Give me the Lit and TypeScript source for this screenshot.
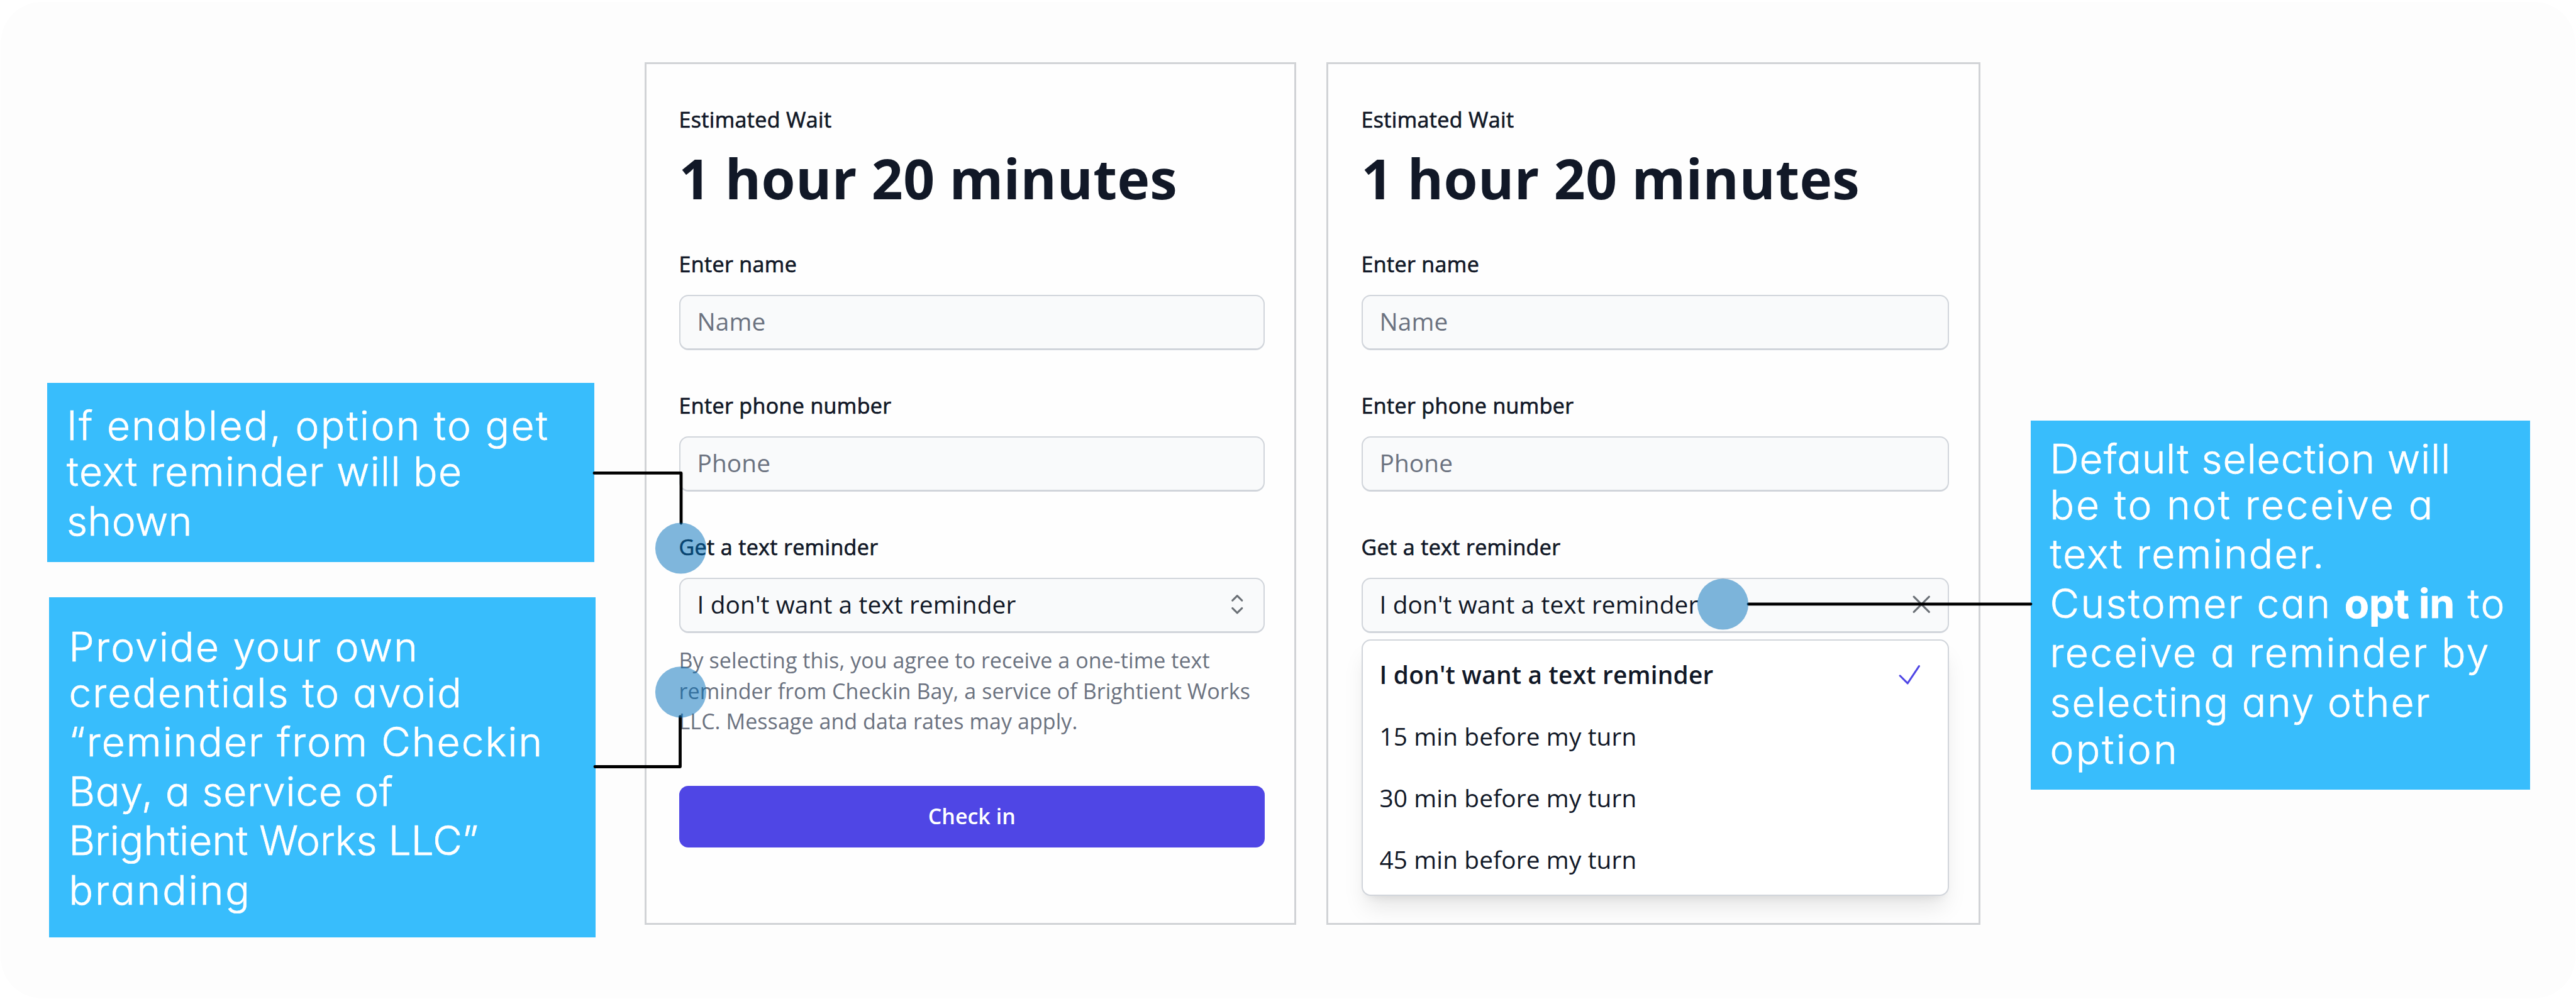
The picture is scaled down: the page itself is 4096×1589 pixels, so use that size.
import {LitElement, html, css, svg, nothing} from 'lit';
import {customElement, property} from 'lit/decorators.js';

interface NoteLine {
  text: unknown;
  spacing: number;
}

const chevrons = svg`<path d="M8.25 15L12 18.75 15.75 15m-7.5-6L12 5.25 15.75 9" />`;
const cross = svg`<path d="M6 18L18 6M6 6l12 12" />`;
const check = svg`<path d="M4.5 12.75l6 6 9-13.5" />`;

@customElement('note-box')
export class NoteBox extends LitElement {
  static override styles = css`
    :host {
      display: block;
      box-sizing: border-box;
      background: #38bdfc;
      color: #fff;
      font-family: 'Century Gothic', Inter, sans-serif;
      font-feature-settings: 'cv11';
      font-size: 64px;
      font-weight: 300;
      line-height: 78.6px;
      -webkit-text-stroke: 0.7px currentColor;
    }

    .line {
      white-space: pre;
    }

    .line:nth-child(2) {
      margin-top: -5.4px;
    }

    .line:nth-child(7) {
      margin-top: -4px;
    }

    b {
      font-weight: 700;
      letter-spacing: 0;
    }
  `;

  @property({attribute: false}) lines: NoteLine[] = [];

  override render() {
    return this.lines.map(
      (l) => html`<div class="line" style="letter-spacing:${l.spacing}px">${l.text}</div>`
    );
  }
}

@customElement('checkin-card')
export class CheckinCard extends LitElement {
  static override styles = css`
    :host {
      display: block;
      box-sizing: border-box;
      height: 1372px;
      border: 3px solid #d1d3d6;
      background: #fefefe;
      padding: 64px 47px 0 51.5px;
      color: #111827;
      font-family: 'Open Sans', 'Noto Sans', sans-serif;
      font-size: 34px;
      line-height: 48.5px;
    }

    h1 {
      margin: 20px 0 0;
      font-size: 87.4px;
      font-weight: 700;
      line-height: 97px;
      letter-spacing: 0.33px;
      white-space: nowrap;
    }

    .label {
      font-weight: 500;
      letter-spacing: 0.36px;
      -webkit-text-stroke: 0.7px currentColor;
    }

    .field {
      position: relative;
      margin-top: 64px;
    }

    .box {
      box-sizing: border-box;
      display: flex;
      align-items: center;
      justify-content: space-between;
      height: 88px;
      margin-top: 24.5px;
      padding: 0 18px 1px 27px;
      border: 2.4px solid #d1d5db;
      border-bottom-width: 3px;
      border-radius: 14.5px;
      background: #f9fafb;
      font-size: 38.8px;
      letter-spacing: 0.12px;
      white-space: nowrap;
    }

    .placeholder {
      color: #6b7280;
    }

    svg {
      flex: none;
      width: 48.5px;
      height: 48.5px;
      fill: none;
      stroke: #6b7076;
      stroke-width: 1.5;
      stroke-linecap: round;
      stroke-linejoin: round;
    }

    .terms {
      margin: 19.5px 0 0;
      color: #6b7280;
      letter-spacing: 0.07px;
      white-space: nowrap;
    }

    .submit {
      display: block;
      box-sizing: border-box;
      width: 100%;
      height: 98px;
      margin-top: 78px;
      border: 0;
      border-radius: 14.5px;
      background: #4f46e5;
      color: #fff;
      font: inherit;
      font-weight: 600;
    }

    .menu {
      position: absolute;
      top: calc(100% + 10px);
      left: 0;
      right: 0;
      box-sizing: border-box;
      height: 408px;
      padding-top: 6px;
      border: 2.4px solid #d1d5db;
      border-radius: 14.5px;
      background: #fff;
      box-shadow: 0 24px 36px -7px rgba(0, 0, 0, 0.1), 0 10px 15px -10px rgba(0, 0, 0, 0.1);
      font-size: 38.8px;
      letter-spacing: 0.12px;
    }

    .option {
      display: flex;
      align-items: center;
      justify-content: space-between;
      height: 97.8px;
      padding: 0 37px 0 27px;
      white-space: nowrap;
    }

    .option.selected {
      font-weight: 600;
      letter-spacing: 0.2px;
    }

    .option svg {
      stroke: #4f46e5;
    }
  `;

  @property({type: Boolean}) open = false;

  private _options = [
    "I don't want a text reminder",
    '15 min before my turn',
    '30 min before my turn',
    '45 min before my turn',
  ];

  override render() {
    return html`
      <div class="label">Estimated Wait</div>
      <h1>1 hour 20 minutes</h1>
      <div class="field">
        <div class="label">Enter name</div>
        <div class="box placeholder">Name</div>
      </div>
      <div class="field">
        <div class="label">Enter phone number</div>
        <div class="box placeholder">Phone</div>
      </div>
      <div class="field">
        <div class="label">Get a text reminder</div>
        <div class="box">
          <span>${this._options[0]}</span>
          <svg viewBox="0 0 24 24">${this.open ? cross : chevrons}</svg>
        </div>
        ${this.open ? this._renderMenu() : nothing}
      </div>
      ${this.open ? nothing : this._renderFooter()}
    `;
  }

  private _renderMenu() {
    return html`
      <div class="menu">
        ${this._options.map(
          (o, i) => html`
            <div class="option ${i === 0 ? 'selected' : ''}">
              <span>${o}</span>
              ${i === 0 ? html`<svg viewBox="0 0 24 24">${check}</svg>` : nothing}
            </div>
          `
        )}
      </div>
    `;
  }

  private _renderFooter() {
    return html`
      <p class="terms">
        By selecting this, you agree to receive a one-time text<br />
        reminder from Checkin Bay, a service of Brightient Works<br />
        LLC. Message and data rates may apply.
      </p>
      <button class="submit">Check in</button>
    `;
  }
}

@customElement('app-root')
export class AppRoot extends LitElement {
  static override styles = css`
    :host {
      display: block;
      position: relative;
      box-sizing: border-box;
      width: 4096px;
      height: 1589px;
      overflow: hidden;
      background: #fff;
      padding: 3px 1px 1px;
    }

    .page {
      box-sizing: border-box;
      display: flex;
      align-items: flex-start;
      height: 1585px;
      padding: 96px 0 0 74px;
      border-radius: 66px;
      background: #fdfdfd;
    }

    .notes {
      width: 872px;
      margin-top: 510px;
    }

    .enabled {
      width: 869.5px;
      height: 284.5px;
      padding: 29px 0 0 31px;
    }

    .credentials {
      width: 869.5px;
      height: 541px;
      margin: 56.5px 0 0 2.5px;
      padding: 39.5px 0 0 32px;
    }

    .first {
      width: 1036px;
      margin-left: 78px;
    }

    .second {
      width: 1040px;
      margin-left: 48px;
      padding-left: 52.5px;
    }

    .default {
      width: 794px;
      height: 586.5px;
      margin: 570px 0 0 79.5px;
      padding: 21.5px 0 0 31px;
    }

    /* connectors and markers lie on top of the cards */
    .overlay {
      position: absolute;
      inset: 0;
      width: 4096px;
      height: 1589px;
    }

    .wire {
      fill: none;
      stroke: #000;
      stroke-width: 4.8;
      stroke-linecap: round;
      stroke-linejoin: round;
    }

    .dot {
      fill: rgba(0, 110, 186, 0.5);
    }
  `;

  private _enabled: NoteLine[] = [
    {text: 'If enabled, option to get', spacing: 2.35},
    {text: 'text reminder will be', spacing: 1.35},
    {text: 'shown', spacing: 0.5},
  ];

  private _credentials: NoteLine[] = [
    {text: 'Provide your own', spacing: 2.25},
    {text: 'credentials to avoid', spacing: 2.05},
    {text: '“reminder from Checkin', spacing: 2.05},
    {text: 'Bay, a service of', spacing: 0.9},
    {text: 'Brightient Works LLC”', spacing: 0.05},
    {text: 'branding', spacing: 3},
  ];

  private _default: NoteLine[] = [
    {text: 'Default selection will', spacing: 1},
    {text: 'be to not receive a', spacing: 2.95},
    {text: 'text reminder.', spacing: 2.25},
    {text: html`Customer can <b>opt in</b> to`, spacing: 2.35},
    {text: 'receive a reminder by', spacing: 2.4},
    {text: 'selecting any other', spacing: 1.9},
    {text: 'option', spacing: 3.2},
  ];

  override render() {
    return html`
      <div class="page">
        <div class="notes">
          <note-box class="enabled" .lines=${this._enabled}></note-box>
          <note-box class="credentials" .lines=${this._credentials}></note-box>
        </div>
        <checkin-card class="first"></checkin-card>
        <checkin-card class="second" open></checkin-card>
        <note-box class="default" .lines=${this._default}></note-box>
      </div>
      <svg class="overlay" viewBox="0 0 4096 1589">
        <path class="wire" d="M945 752.4H1083V832" />
        <path class="wire" d="M946 1219.5H1081.5V1140" />
        <path class="wire" d="M2780 960.8H3229" />
        <circle class="dot" cx="1082.5" cy="872" r="40.6" />
        <circle class="dot" cx="1082.5" cy="1100.8" r="40.6" />
        <circle class="dot" cx="2739.5" cy="961" r="40.6" />
      </svg>
    `;
  }
}

declare global {
  interface HTMLElementTagNameMap {
    'note-box': NoteBox;
    'checkin-card': CheckinCard;
    'app-root': AppRoot;
  }
}
